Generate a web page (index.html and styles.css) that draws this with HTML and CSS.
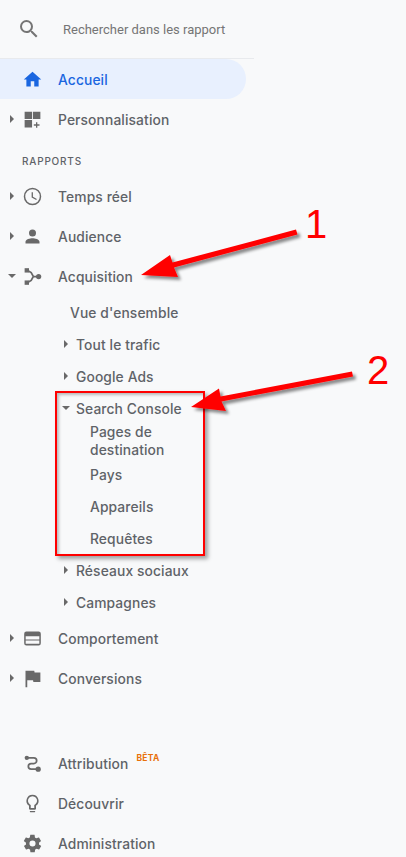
FILE: index.html
```html
<!DOCTYPE html>
<html lang="fr">
<head>
<meta charset="utf-8">
<title>Rapports</title>
<link rel="stylesheet" href="styles.css">
</head>
<body>
<nav class="nav">
  <div class="search">
    <svg class="search-icon" viewBox="0 0 24 24" width="24" height="24"><path fill="#757575" d="M15.5 14h-.79l-.28-.27A6.47 6.47 0 0 0 16 9.5 6.5 6.5 0 1 0 9.5 16c1.61 0 3.09-.59 4.23-1.57l.27.28v.79l5 4.99L20.49 19l-4.99-5zm-6 0C7.01 14 5 11.99 5 9.5S7.01 5 9.5 5 14 7.01 14 9.5 11.99 14 9.5 14z"/></svg>
    <span class="search-text">Rechercher dans les rapport</span>
  </div>
  <a class="row active">
    <span class="caret"></span>
    <svg class="icon" viewBox="0 0 24 24"><path fill="#1a66e0" d="M10 20v-6h4v6h5v-8h3L12 3 2 12h3v8z"/></svg>
    <span>Accueil</span>
  </a>
  <a class="row">
    <span class="caret right"></span>
    <svg class="icon" viewBox="0 0 24 24"><path fill="#696969" d="M3 3h8.500v8.500H3zM12.500 3H21v8.500h-8.500zM3 12.500h8.500V21H3zM16 15h1.500v2.500H20V19h-2.500v2.500H16V19h-2.500v-1.500H16z"/></svg>
    <span>Personnalisation</span>
  </a>
  <div class="section">RAPPORTS</div>
  <a class="row">
    <span class="caret right"></span>
    <svg class="icon" viewBox="0 0 24 24"><path fill="#696969" d="M12 2a10 10 0 1 0 0 20 10 10 0 0 0 0-20zm0 18.300a8.300 8.300 0 1 1 0-16.600 8.300 8.300 0 0 1 0 16.600zM12.500 7H11v6l5.200 3.100.8-1.200-4.500-2.700z"/></svg>
    <span>Temps réel</span>
  </a>
  <a class="row">
    <span class="caret right"></span>
    <svg class="icon" viewBox="0 0 24 24"><path fill="#696969" d="M12 12a4 4 0 1 0 0-8 4 4 0 0 0 0 8zm0 2c-2.700 0-8 1.300-8 4v2h16v-2c0-2.700-5.300-4-8-4z"/></svg>
    <span>Audience</span>
  </a>
  <a class="row">
    <span class="caret down"></span>
    <svg class="icon" viewBox="0 0 24 24"><path fill="none" stroke="#696969" stroke-width="2" d="M6 5l4.500 2.500L13 12l-2.500 4.500L6 19M13 12h6"/><rect fill="#696969" x="3" y="2.500" width="5" height="5"/><rect fill="#696969" x="3" y="16.500" width="5" height="5"/><circle fill="#696969" cx="19" cy="12" r="3"/></svg>
    <span>Acquisition</span>
  </a>
  <a class="sub plain"><span>Vue d'ensemble</span></a>
  <a class="sub"><span class="caret right"></span><span>Tout le trafic</span></a>
  <a class="sub"><span class="caret right"></span><span>Google Ads</span></a>
  <a class="sub"><span class="caret down"></span><span>Search Console</span></a>
  <a class="leaf double"><span>Pages de destination</span></a>
  <a class="leaf"><span>Pays</span></a>
  <a class="leaf"><span>Appareils</span></a>
  <a class="leaf"><span>Requêtes</span></a>
  <a class="sub"><span class="caret right"></span><span>Réseaux sociaux</span></a>
  <a class="sub"><span class="caret right"></span><span>Campagnes</span></a>
  <a class="row">
    <span class="caret right"></span>
    <svg class="icon" viewBox="0 0 24 24"><path fill="#696969" fill-rule="evenodd" d="M5 4h14a2.500 2.500 0 0 1 2.500 2.500v11a2.500 2.500 0 0 1-2.500 2.500H5a2.500 2.500 0 0 1-2.500-2.500v-11A2.500 2.500 0 0 1 5 4zM4.200 9.500V13h15.600V9.500zM4.200 14.300V18h15.600v-3.700z"/></svg>
    <span>Comportement</span>
  </a>
  <a class="row">
    <span class="caret right"></span>
    <svg class="icon" viewBox="0 0 24 24"><path fill="#696969" d="M14.400 5L14 3H4v19h2v-8h6.600l.4 2h8V5z"/></svg>
    <span>Conversions</span>
  </a>
  <div class="bottom">
    <a class="row">
      <span class="caret"></span>
      <svg class="icon" viewBox="0 0 24 24"><path fill="none" stroke="#696969" stroke-width="2" d="M6 5.500h7.500a3.200 3.200 0 0 1 0 6.500h-3a3.200 3.200 0 0 0 0 6.500H18"/><circle fill="#696969" cx="5.500" cy="5.500" r="2.500"/><circle fill="#696969" cx="18.500" cy="18.500" r="3"/></svg>
      <span>Attribution</span><sup class="beta">BÊTA</sup>
    </a>
    <a class="row">
      <span class="caret"></span>
      <svg class="icon" viewBox="0 0 24 24"><path fill="#696969" d="M9 21.500c0 .3.200.5.500.5h5c.3 0 .5-.2.500-.5V20.500H9zM12 2a7 7 0 0 0-4 12.700V18c0 .5.400 1 1 1h6c.6 0 1-.5 1-1v-3.300A7 7 0 0 0 12 2zm2.900 11.100l-.9.600V17h-4v-3.300l-.9-.6a5.200 5.200 0 1 1 5.800 0z"/></svg>
      <span>Découvrir</span>
    </a>
    <a class="row">
      <span class="caret"></span>
      <svg class="icon" viewBox="0 0 24 24"><path fill="#696969" d="M19.400 13c0-.3.100-.6.100-1s0-.7-.1-1l2.100-1.600c.2-.2.200-.4.100-.6l-2-3.500c-.1-.2-.4-.3-.6-.2l-2.500 1c-.5-.4-1.100-.7-1.700-1l-.4-2.700c0-.2-.2-.4-.5-.4h-4c-.3 0-.5.200-.5.400l-.4 2.700c-.6.200-1.200.6-1.700 1l-2.500-1c-.2-.1-.5 0-.6.200l-2 3.500c-.1.200-.1.400.1.600L4.600 11c0 .3-.1.700-.1 1s0 .7.100 1l-2.100 1.600c-.2.200-.2.400-.1.600l2 3.500c.1.200.4.300.6.200l2.500-1c.5.400 1.100.7 1.700 1l.4 2.700c0 .2.200.4.500.4h4c.3 0 .5-.2.500-.4l.4-2.700c.6-.2 1.200-.6 1.700-1l2.500 1c.2.100.5 0 .6-.2l2-3.500c.1-.2.100-.4-.1-.6zM12 15.500a3.500 3.500 0 1 1 0-7 3.500 3.500 0 0 1 0 7z"/></svg>
      <span>Administration</span>
    </a>
  </div>
</nav>

<div class="red-box"></div>
<svg class="arrows" viewBox="0 0 406 857" width="406" height="857">
  <defs>
    <filter id="shadow" x="-20%" y="-40%" width="140%" height="190%">
      <feDropShadow dx="3" dy="3" stdDeviation="1.500" flood-color="#000" flood-opacity="0.45"/>
    </filter>
  </defs>
  <g filter="url(#shadow)" fill="#ff0000">
    <path d="M296 229.500L297.500 234.500L174 267.500L178 277L141 275L170 255L172.500 262.500Z"/>
    <path d="M352 371.500L353 376.500L221.500 401.500L226 411L191 407L219 388.500L220.500 396.500Z"/>
  </g>
  <text class="num" x="305" y="238">1</text>
  <text class="num" x="367" y="384">2</text>
</svg>
</body>
</html>
```
FILE: styles.css
```css
* { box-sizing: border-box; }
html, body { margin: 0; padding: 0; }
body {
  position: relative;
  width: 406px;
  height: 857px;
  overflow: hidden;
  background: #f8f9fa;
  font-family: "Inter", "Noto Sans", sans-serif;
  color: #5f6368;
}
.nav { width: 254px; font-size: 13.8px; font-weight: 500; letter-spacing: 0.12px; }
.search {
  height: 59px;
  display: flex;
  align-items: center;
  padding-left: 17px;
  border-bottom: 1px solid #e8eaed;
}
.search-icon { flex: none; }
.search-text {
  margin-left: 22px;
  font-family: "Roboto", sans-serif;
  font-size: 13px;
  font-weight: 400;
  letter-spacing: 0;
  color: #757575;
  white-space: nowrap;
}
.row {
  height: 40px;
  width: 246px;
  display: flex;
  align-items: center;
  padding: 1px 0 0 8px;
  white-space: nowrap;
}
.active {
  background: #e8f0fe;
  border-radius: 0 20px 20px 0;
  color: #1a66e0;
}
.caret { flex: none; width: 8px; height: 10px; margin-top: -1px; position: relative; }
.caret.right::before, .caret.down::before {
  content: "";
  position: absolute;
  width: 0;
  height: 0;
}
.caret.right::before {
  left: 2px; top: 1px;
  border-left: 4px solid #696969;
  border-top: 4px solid transparent;
  border-bottom: 4px solid transparent;
}
.caret.down::before {
  left: 0; top: 3px;
  border-top: 4px solid #696969;
  border-left: 4px solid transparent;
  border-right: 4px solid transparent;
}
.icon { flex: none; width: 21px; height: 21px; margin: -1px 15px 0 6px; }
.section {
  height: 37px;
  padding: 15px 0 0 22px;
  font-size: 10px;
  line-height: 14px;
  letter-spacing: 0.8px;
  font-weight: 500;
}
.sub {
  height: 32px;
  display: flex;
  align-items: center;
  padding: 1px 0 0 62px;
  white-space: nowrap;
}
.sub .caret { margin-right: 6px; }
.sub.plain { padding-left: 70px; }
.leaf {
  height: 32px;
  display: flex;
  align-items: center;
  padding: 1px 0 0 90px;
  width: 200px;
}
.leaf.double { height: 34px; padding-top: 0; line-height: 18px; width: 190px; }
.bottom { margin-top: 45px; }
.beta {
  align-self: flex-start;
  margin: 9px 0 0 8px;
  font-size: 8.5px;
  font-weight: 700;
  line-height: 10px;
  color: #e8710a;
  letter-spacing: 0.3px;
}
.red-box {
  position: absolute;
  left: 55px;
  top: 391px;
  width: 150px;
  height: 165px;
  border: 2px solid #ff0000;
  box-shadow: 3px 3px 4px rgba(0, 0, 0, 0.35), inset 2px 2px 3px rgba(0, 0, 0, 0.25);
}
.arrows { position: absolute; left: 0; top: 0; pointer-events: none; }
.num {
  font-family: "Liberation Sans", sans-serif;
  font-size: 40px;
  fill: #ff0000;
}
```
